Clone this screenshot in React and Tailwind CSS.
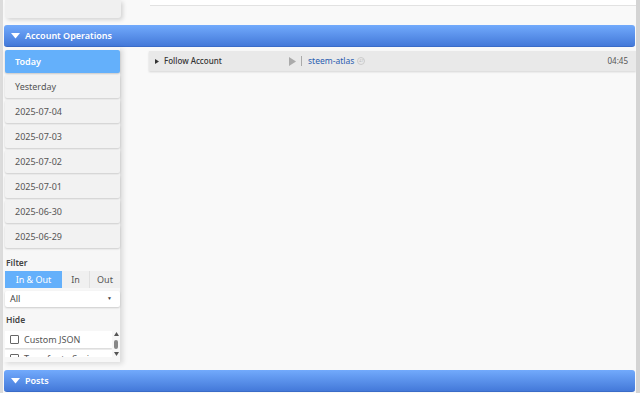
import React from 'react';

const days = ['Yesterday', '2025-07-04', '2025-07-03', '2025-07-02', '2025-07-01', '2025-06-30', '2025-06-29'];

const SectionBar = ({ title }) => (
  <div className="h-[22px] ml-[1px] mr-[1px] rounded-[3px] bg-gradient-to-b from-[#72aafc] to-[#4479d9] border-b border-[#3a6cc8] flex items-center pl-[7px] gap-[5px] text-white text-[9px] font-semibold">
    <svg width="9" height="6" viewBox="0 0 9 6">
      <path d="M0 0 L9 0 L4.5 5.5 Z" fill="#fff" />
    </svg>
    <span>{title}</span>
  </div>
);

export default function App() {
  return (
    <div className="w-[640px] h-[393px] overflow-hidden flex bg-[#f9f9f9]" style={{ fontFamily: '"Noto Sans", "Open Sans", sans-serif' }}>
      <div className="w-[3px] bg-[#dcdcdc] shrink-0" />
      <div className="flex-1 flex flex-col min-w-0">
        {/* top remains of previous section */}
        <div className="h-[25px] flex">
          <div className="w-[116px] ml-[2px] h-[18px] bg-[#f0f0f0] rounded-b-[3px] shadow-[2px_2px_4px_rgba(0,0,0,0.15)]" />
          <div className="flex-1 ml-[29px] h-[6px] bg-white border-b border-[#e2e2e2]" />
        </div>

        <SectionBar title="Account Operations" />

        <div className="flex-1 flex min-h-0">
          {/* sidebar */}
          <div className="w-[117px] shrink-0 flex flex-col pl-[2px] pt-[3px] pb-[5px] shadow-[3px_2px_5px_rgba(0,0,0,0.12)] bg-[#f7f7f7] self-start">
            <div className="flex flex-col gap-[2px]">
              <div className="h-[23px] rounded-[2px] bg-[#64b0fb] text-white font-semibold text-[9px] flex items-center pl-[10px] shadow-[0_1px_2px_rgba(0,0,0,0.2)]">Today</div>
              {days.map((d) => (
                <div key={d} className="h-[23px] rounded-[2px] bg-[#f2f2f2] text-[#555] text-[9px] flex items-center pl-[10px] shadow-[0_1px_2px_rgba(0,0,0,0.18)]">{d}</div>
              ))}
            </div>
            <div className="h-[23px] flex items-end pb-[1px] pl-[1px] text-[8.5px] font-semibold text-[#444]">Filter</div>
            <div className="h-[17px] flex text-[9px]">
              <div className="w-[57px] bg-[#64b0fb] text-white flex items-center justify-center">In &amp; Out</div>
              <div className="w-[28px] bg-[#f0f0f0] text-[#555] flex items-center justify-center border-r border-[#e0e0e0]">In</div>
              <div className="flex-1 bg-[#f0f0f0] text-[#555] flex items-center justify-center">Out</div>
            </div>
            <div className="mt-[3px] h-[16px] bg-white rounded-[2px] flex items-center justify-between pl-[5px] pr-[8px] text-[9px] text-[#444] shadow-[0_1px_2px_rgba(0,0,0,0.18)]">
              <span>All</span>
              <span className="text-[5px]">▼</span>
            </div>
            <div className="h-[24px] flex items-center pt-[3px] pl-[1px] text-[8.5px] font-semibold text-[#444]">Hide</div>
            <div className="h-[26px] flex overflow-hidden">
              <div className="flex-1 flex flex-col gap-[2px] overflow-hidden">
                <div className="h-[17px] shrink-0 bg-white flex items-center pl-[5px] gap-[5px] text-[9px] text-[#555] whitespace-nowrap shadow-[0_1px_2px_rgba(0,0,0,0.15)]">
                  <span className="w-[9px] h-[9px] shrink-0 border border-[#666] rounded-[1px] bg-white" />
                  <span>Custom JSON</span>
                </div>
                <div className="h-[17px] shrink-0 bg-white flex items-center pl-[5px] gap-[5px] text-[9px] text-[#555] whitespace-nowrap">
                  <span className="w-[9px] h-[9px] shrink-0 border border-[#666] rounded-[1px] bg-white" />
                  <span>Transfer to Savings</span>
                </div>
              </div>
              <div className="w-[8px] shrink-0 flex flex-col items-center justify-between py-[1px] bg-[#f7f7f7]">
                <svg width="5" height="4" viewBox="0 0 5 4"><path d="M0 4 L5 4 L2.5 0 Z" fill="#555" /></svg>
                <div className="w-[4px] h-[9px] rounded-full bg-[#888]" />
                <svg width="5" height="4" viewBox="0 0 5 4"><path d="M0 0 L5 0 L2.5 4 Z" fill="#555" /></svg>
              </div>
            </div>
          </div>

          {/* main */}
          <div className="flex-1 pl-[29px] pt-[4px]">
            <div className="h-[20px] bg-[#e9e9e9] shadow-[0_1px_2px_rgba(0,0,0,0.15)] flex items-center text-[8px]">
              <svg className="ml-[6px]" width="4" height="5" viewBox="0 0 4 5"><path d="M0 0 L4 2.5 L0 5 Z" fill="#333" /></svg>
              <span className="ml-[5px] w-[125px] font-medium text-[#333]">Follow Account</span>
              <svg width="7" height="9" viewBox="0 0 7 9"><path d="M0 0 L7 4.5 L0 9 Z" fill="#aaa" /></svg>
              <span className="ml-[5px] w-[1px] h-[10px] bg-[#aaa]" />
              <span className="ml-[6px] text-[8.5px] text-[#2a5db0]">steem-atlas</span>
              <span className="ml-[3px] w-[8px] h-[8px] rounded-full border border-[#ccc] text-[4px] text-[#bbb] flex items-center justify-center">47</span>
              <span className="ml-auto mr-[8px] text-[8px] text-[#555]">04:45</span>
            </div>
          </div>
        </div>

        <div className="mt-[3px] mb-[1px]">
          <SectionBar title="Posts" />
        </div>
      </div>
      <div className="w-[4px] bg-[#d4d4d4] shrink-0" />
    </div>
  );
}
